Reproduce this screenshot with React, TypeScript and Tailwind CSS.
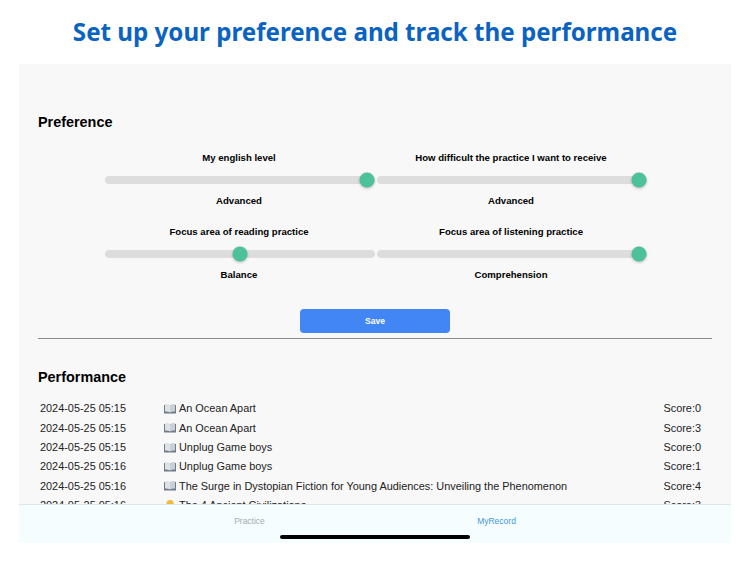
import React from "react";

const sliders = [
  [
    { label: "My english level", value: "Advanced", pos: 100 },
    { label: "How difficult the practice I want to receive", value: "Advanced", pos: 100 },
  ],
  [
    { label: "Focus area of reading practice", value: "Balance", pos: 50 },
    { label: "Focus area of listening practice", value: "Comprehension", pos: 100 },
  ],
];

const records = [
  { date: "2024-05-25 05:15", title: "An Ocean Apart", score: "Score:0" },
  { date: "2024-05-25 05:15", title: "An Ocean Apart", score: "Score:3" },
  { date: "2024-05-25 05:15", title: "Unplug Game boys", score: "Score:0" },
  { date: "2024-05-25 05:16", title: "Unplug Game boys", score: "Score:1" },
  { date: "2024-05-25 05:16", title: "The Surge in Dystopian Fiction for Young Audiences: Unveiling the Phenomenon", score: "Score:4" },
  { date: "2024-05-25 05:16", title: "The 4 Ancient Civilizations", score: "Score:3", ear: true },
];

function BookIcon() {
  return (
    <svg width="12" height="11" viewBox="0 0 12 11" className="shrink-0">
      <path d="M0 2h12v8.5h-12z" fill="#6f7b88" />
      <path d="M1 1c1.8 0 3.8 0.2 5 1.2v7.3c-1.2-0.8-3.2-1-5-1z" fill="#dde2e7" />
      <path d="M11 1c-1.8 0-3.8 0.2-5 1.2v7.3c1.2-0.8 3.2-1 5-1z" fill="#c9d0d6" />
    </svg>
  );
}

function EarIcon() {
  return (
    <svg width="12" height="12" viewBox="0 0 12 12" className="shrink-0">
      <path d="M2.5 4.5a3.6 3.6 0 0 1 7.2 0c0 2.4-2.2 3-2.6 5-0.3 1.4-3 1.6-3.4 0-0.3-1.8-1.2-2.8-1.2-5z" fill="#f2b93b" />
    </svg>
  );
}

function Setting({ label, value, pos }: { label: string; value: string; pos: number }) {
  return (
    <div className="flex w-[272px] flex-col items-center">
      <div className="flex h-[15px] items-center text-[9.6px] font-bold text-black">{label}</div>
      <div className="relative mt-[10px] ml-[2px] h-2 w-[270px] self-start rounded-[4px] bg-[#dddddd]">
        <div
          className="absolute top-1/2 h-[15px] w-[15px] -translate-x-1/2 -translate-y-1/2 rounded-full bg-[#4dc19a] shadow-[0_1px_3px_rgba(0,0,0,0.25)]"
          style={{ left: pos === 100 ? "calc(100% - 8px)" : `${pos}%` }}
        />
      </div>
      <div className="mt-[10px] flex h-[15px] items-center text-[9.6px] font-bold text-black">{value}</div>
    </div>
  );
}

export default function App() {
  return (
    <div className="flex h-[562px] w-[750px] flex-col overflow-hidden bg-white font-['Liberation_Sans',sans-serif]">
      <h1 className="mt-[13px] h-[51px] shrink-0 text-center font-['Noto_Sans',sans-serif] text-[24.15px] leading-[38px] font-bold text-[#0b63c1]">
        Set up your preference and track the performance
      </h1>
      <div className="mx-[19px] flex h-[479px] flex-col overflow-hidden bg-[#f8f8f8]">
        <div className="h-[440px] shrink-0 overflow-hidden px-[19px]">
          <h2 className="mt-[48px] text-[14.4px] leading-[20px] font-bold text-black">Preference</h2>
          <div className="mt-[19px] flex flex-col gap-[16px]">
            {sliders.map((row, i) => (
              <div key={i} className="flex justify-center">
                {row.map((s) => (
                  <Setting key={s.label} {...s} />
                ))}
              </div>
            ))}
          </div>
          <div className="mt-[26px] flex justify-center">
            <button className="h-[24px] w-[150px] rounded-[4px] bg-[#4285f4] text-[8.5px] font-bold text-white">Save</button>
          </div>
          <div className="mt-[5px] border-t border-[#8a8a8a]" />
          <h2 className="mt-[28px] text-[14.4px] leading-[20px] font-bold text-black">Performance</h2>
          <div className="mt-[12px] flex flex-col">
            {records.map((r, i) => (
              <div key={i} className="flex h-[19.3px] items-center text-[10.9px] text-[#222222]">
                <span className="ml-[2px] w-[124px] shrink-0">{r.date}</span>
                <span className="flex min-w-0 flex-1 items-center gap-[3px]">
                  {r.ear ? <EarIcon /> : <BookIcon />}
                  <span>{r.title}</span>
                </span>
                <span className="mr-[11px]">{r.score}</span>
              </div>
            ))}
          </div>
        </div>
        <div className="relative flex h-[39px] shrink-0 border-t border-[#dfe6e8] bg-[#f5fdff] pl-[107px]">
          <div className="flex h-[32px] w-[247px] items-center justify-center text-[8.5px] text-[#a6adb0]">Practice</div>
          <div className="flex h-[32px] w-[247px] items-center justify-center text-[8.5px] text-[#3f97e0]">MyRecord</div>
          <div className="absolute top-[30px] left-[261px] h-[4px] w-[190px] rounded-full bg-black" />
        </div>
      </div>
    </div>
  );
}
